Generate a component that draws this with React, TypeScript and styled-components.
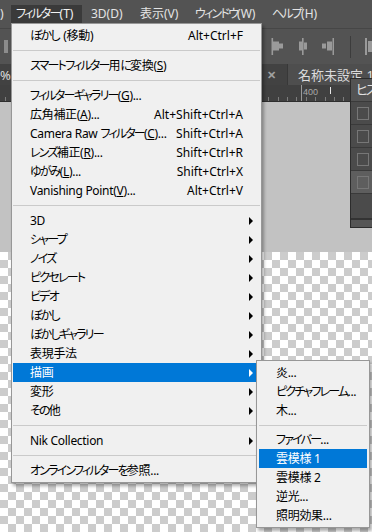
import React from "react";
import styled, { createGlobalStyle, css } from "styled-components";

const GlobalStyle = createGlobalStyle`
  html, body { margin: 0; padding: 0; background: #535353; }
  body { width: 372px; height: 532px; overflow: hidden; }
  #root { width: 372px; height: 532px; }
`;

const UI_FONT = `"Noto Sans", "Noto Sans CJK JP", sans-serif`;

const Screen = styled.div`
  position: relative;
  width: 372px;
  height: 532px;
  overflow: hidden;
  display: flex;
  flex-direction: column;
  font-family: ${UI_FONT};
  font-feature-settings: "palt";
`;

/* kana runs are set tighter, like the proportional kana of the Windows UI font */
const Kana = styled.span<{ $keepGap?: boolean }>`
  letter-spacing: -1.8px;
  margin-right: ${(p) => (p.$keepGap ? "1.8px" : "0")};
`;

const Key = styled.u`
  text-underline-offset: 1px;
`;

/* splits a label into kana / other runs; "&X" marks an underlined access key */
function Txt({ children }: { children: string }) {
  const parts = children.split(/(&.|[\u3041-\u30ff]+)/).filter(Boolean);
  return (
    <>
      {parts.map((p, i) =>
        p[0] === "&" ? (
          <Key key={i}>{p.slice(1)}</Key>
        ) : /[\u3041-\u30ff]/.test(p) ? (
          <Kana key={i} $keepGap={(parts[i + 1] || "").startsWith(" ")}>
            {p}
          </Kana>
        ) : (
          <React.Fragment key={i}>{p}</React.Fragment>
        )
      )}
    </>
  );
}

/* ---------- application chrome ---------- */

const MenuBar = styled.div`
  flex: none;
  height: 29px;
  box-sizing: border-box;
  padding-top: 5px;
  display: flex;
  align-items: flex-start;
  background: #535353;
  border-bottom: 1px solid #464646;
`;

const MenuBarItem = styled.div<{ $w?: number; $active?: boolean; $flush?: boolean }>`
  flex: none;
  width: ${(p) => (p.$w ? `${p.$w}px` : "auto")};
  height: 18px;
  box-sizing: border-box;
  padding: 0 ${(p) => (p.$flush ? "0" : "5px")};
  font-size: 12px;
  line-height: 18px;
  color: #e4e4e4;
  white-space: nowrap;
  overflow: hidden;
  ${(p) =>
    p.$active &&
    css`
      background: #3a3a3a;
      color: #f2f2f2;
    `}
`;

const OptionsBar = styled.div`
  flex: none;
  height: 35px;
  display: flex;
  align-items: center;
  background: #535353;
  padding-left: 4px;
`;

const Grip = styled.div`
  width: 4px;
  height: 13px;
  background: #8c8c8c;
`;

const OptionsIcons = styled.div`
  margin-left: auto;
  display: flex;
  align-items: center;
  gap: 12px;
  height: 100%;
`;

const OptionsDivider = styled.div`
  width: 1px;
  height: 22px;
  background: #3c3c3c;
  margin: 0 2px 0 4px;
`;

const TabRow = styled.div`
  flex: none;
  height: 21px;
  display: flex;
  background: #383838;
`;

const Tab = styled.div<{ $w?: number; $active?: boolean }>`
  flex: ${(p) => (p.$w ? "none" : "1")};
  width: ${(p) => (p.$w ? `${p.$w}px` : "auto")};
  display: flex;
  align-items: center;
  box-sizing: border-box;
  padding: ${(p) => (p.$active ? "0 0 0 10px" : "0 11px 0 0")};
  background: ${(p) => (p.$active ? "#4e4e4e" : "#424242")};
  border-left: ${(p) => (p.$active ? "1px solid #383838" : "none")};
  font-size: 13px;
  color: #dcdcdc;
  white-space: nowrap;
  overflow: hidden;
`;

const TabText = styled.span`
  flex: 1;
  overflow: hidden;
`;

const TabClose = styled.span`
  font-size: 11px;
  color: #a0a0a0;
  font-weight: bold;
`;

const Ruler = styled.div`
  position: relative;
  flex: none;
  height: 16px;
  background-color: #404040;
  background-image: linear-gradient(#9a9a9a, #9a9a9a),
    repeating-linear-gradient(to right, #7c7c7c 0 1px, transparent 1px 9.4px);
  background-size: 1px 16px, 100% 4px;
  background-position: 301px 0, 5px 100%;
  background-repeat: no-repeat, no-repeat;
  border-bottom: 1px solid #2e2e2e;
`;

const RulerLabel = styled.span`
  position: absolute;
  left: 303px;
  top: 2px;
  font-family: "Liberation Sans", sans-serif;
  font-size: 9px;
  color: #a8a8a8;
`;

const RulerMarker = styled.span`
  position: absolute;
  left: 330px;
  top: 2px;
  width: 1px;
  height: 7px;
  background: #e8e8e8;
`;

const Pasteboard = styled.div`
  flex: none;
  height: 150px;
  background: #c2c2c2;
`;

const Transparency = styled.div`
  flex: 1;
  background-color: #ffffff;
  background-image: linear-gradient(45deg, #cccccc 25%, transparent 25%, transparent 75%, #cccccc 75%),
    linear-gradient(45deg, #cccccc 25%, transparent 25%, transparent 75%, #cccccc 75%);
  background-size: 16px 16px;
  background-position: 0 0, 8px 8px;
`;

/* ---------- floating history panel ---------- */

const HistoryPanel = styled.div`
  position: absolute;
  left: 350px;
  top: 78px;
  width: 24px;
  height: 150px;
  display: flex;
  flex-direction: column;
  background: #535353;
  border: 1px solid #2c2c2c;
  border-right: none;
  box-sizing: border-box;
  overflow: hidden;
`;

const PanelTitle = styled.div`
  height: 22px;
  flex: none;
  padding-left: 5px;
  font-size: 13px;
  line-height: 20px;
  color: #e0e0e0;
  white-space: nowrap;
  overflow: hidden;
  border-bottom: 1px solid #3a3a3a;
`;

const PanelRow = styled.div<{ $selected?: boolean }>`
  height: 22px;
  flex: none;
  display: flex;
  align-items: center;
  padding-left: 6px;
  background: ${(p) => (p.$selected ? "#5e5e5e" : "#4b4b4b")};
  border-bottom: 1px solid #3a3a3a;
`;

const PanelCheck = styled.span`
  width: 10px;
  height: 11px;
  border: 1px solid #777777;
`;

const PanelFill = styled.div`
  flex: 1;
  background: #4b4b4b;
  border-bottom: 2px solid #333333;
`;

const PanelFooter = styled.div`
  height: 7px;
  flex: none;
  background: #555555;
`;

/* ---------- popup menus ---------- */

const Popup = styled.div<{ $left: number; $top: number; $width: number }>`
  position: absolute;
  left: ${(p) => p.$left}px;
  top: ${(p) => p.$top}px;
  width: ${(p) => p.$width}px;
  box-sizing: border-box;
  padding: 2px 0;
  background: #f0f0f0;
  border: 1px solid #979797;
  box-shadow: 2px 3px 3px rgba(0, 0, 0, 0.32);
  font-size: 12px;
  color: #000000;
`;

const Row = styled.div<{ $active?: boolean; $inset: number }>`
  height: 19px;
  margin: 0 ${(p) => p.$inset}px;
  display: flex;
  align-items: center;
  padding: 0 7px 0 17px;
  line-height: 19px;
  white-space: nowrap;
  ${(p) =>
    p.$active &&
    css`
      background: #0078d7;
      color: #ffffff;
    `}
`;

const Label = styled.span`
  flex: 1;
  letter-spacing: -0.3px;
`;

const Shortcut = styled.span`
  margin-right: 10px;
`;

const Arrow = styled.span<{ $active?: boolean }>`
  width: 0;
  height: 0;
  border-left: 4px solid ${(p) => (p.$active ? "#ffffff" : "#000000")};
  border-top: 4px solid transparent;
  border-bottom: 4px solid transparent;
`;

const Separator = styled.div<{ $inset: number; $h: number }>`
  height: ${(p) => p.$h}px;
  margin: 0 ${(p) => p.$inset}px;
  display: flex;
  align-items: center;
  &::after {
    content: "";
    flex: 1;
    height: 1px;
    background: #cacaca;
  }
`;

type Item =
  | { sep: true }
  | { label: string; shortcut?: string; sub?: boolean; active?: boolean };

const filterItems: Item[] = [
  { label: "ぼかし (移動)", shortcut: "Alt+Ctrl+F" },
  { sep: true },
  { label: "スマートフィルター用に変換(&S)" },
  { sep: true },
  { label: "フィルターギャラリー(&G)..." },
  { label: "広角補正(&A)...", shortcut: "Alt+Shift+Ctrl+A" },
  { label: "Camera Raw フィルター(&C)...", shortcut: "Shift+Ctrl+A" },
  { label: "レンズ補正(&R)...", shortcut: "Shift+Ctrl+R" },
  { label: "ゆがみ(&L)...", shortcut: "Shift+Ctrl+X" },
  { label: "Vanishing Point(&V)...", shortcut: "Alt+Ctrl+V" },
  { sep: true },
  { label: "3D", sub: true },
  { label: "シャープ", sub: true },
  { label: "ノイズ", sub: true },
  { label: "ピクセレート", sub: true },
  { label: "ビデオ", sub: true },
  { label: "ぼかし", sub: true },
  { label: "ぼかしギャラリー", sub: true },
  { label: "表現手法", sub: true },
  { label: "描画", sub: true, active: true },
  { label: "変形", sub: true },
  { label: "その他", sub: true },
  { sep: true },
  { label: "Nik Collection", sub: true },
  { sep: true },
  { label: "オンラインフィルターを参照..." },
];

const renderItems: Item[] = [
  { label: "炎..." },
  { label: "ピクチャフレーム..." },
  { label: "木..." },
  { sep: true },
  { label: "ファイバー..." },
  { label: "雲模様 1", active: true },
  { label: "雲模様 2" },
  { label: "逆光..." },
  { label: "照明効果..." },
];

function Menu({
  items,
  left,
  top,
  width,
  inset,
  sepH,
}: {
  items: Item[];
  left: number;
  top: number;
  width: number;
  inset: number;
  sepH: number;
}) {
  return (
    <Popup $left={left} $top={top} $width={width}>
      {items.map((it, i) =>
        "sep" in it ? (
          <Separator key={i} $inset={inset} $h={sepH} />
        ) : (
          <Row key={i} $inset={inset} $active={it.active}>
            <Label>
              <Txt>{it.label}</Txt>
            </Label>
            {it.shortcut && <Shortcut>{it.shortcut}</Shortcut>}
            {it.sub && <Arrow $active={it.active} />}
          </Row>
        )
      )}
    </Popup>
  );
}

const AlignIcon = ({ variant }: { variant: "left" | "center" | "right" }) => {
  const lineX = variant === "left" ? 1 : variant === "center" ? 6.5 : 12;
  const bars =
    variant === "left"
      ? [
          [2, 3, 6, 9],
          [8, 5, 4, 5],
        ]
      : variant === "center"
      ? [
          [3, 3, 3, 9],
          [8, 4, 3, 7],
        ]
      : [
          [6, 3, 5, 9],
          [1, 5, 4, 5],
        ];
  return (
    <svg width="13" height="17" viewBox="0 0 13 17">
      <rect x={lineX - 0.5} y="0" width="1.6" height="17" fill="#9a9a9a" />
      {bars.map(([x, y, w, h], i) => (
        <rect key={i} x={x} y={y + 0.5} width={w} height={h} fill="#9a9a9a" />
      ))}
    </svg>
  );
};

const DistIcon = () => (
  <svg width="7" height="17" viewBox="0 0 7 17">
    <rect x="0" y="0" width="2" height="17" fill="#9a9a9a" />
    <rect x="3" y="3" width="4" height="11" fill="#9a9a9a" />
  </svg>
);

export default function App() {
  return (
    <>
      <GlobalStyle />
      <Screen>
        <MenuBar>
          <MenuBarItem $w={11} $flush>
            )
          </MenuBarItem>
          <MenuBarItem $w={71} $active>
            <Txt>フィルター(T)</Txt>
          </MenuBarItem>
          <MenuBarItem $w={49} style={{ marginLeft: 4 }}>
            3D(D)
          </MenuBarItem>
          <MenuBarItem $w={55}>表示(V)</MenuBarItem>
          <MenuBarItem $w={77}>
            <Txt>ウィンドウ(W)</Txt>
          </MenuBarItem>
          <MenuBarItem>
            <Txt>ヘルプ(H)</Txt>
          </MenuBarItem>
        </MenuBar>
        <OptionsBar>
          <Grip />
          <OptionsIcons>
            <AlignIcon variant="left" />
            <AlignIcon variant="center" />
            <AlignIcon variant="right" />
            <OptionsDivider />
            <DistIcon />
          </OptionsIcons>
        </OptionsBar>
        <TabRow>
          <Tab $w={287}>
            <TabText>%</TabText>
            <TabClose>✕</TabClose>
          </Tab>
          <Tab $active>名称未設定 1 @ 66.7% (RGB/8)</Tab>
        </TabRow>
        <Ruler>
          <RulerLabel>400</RulerLabel>
          <RulerMarker />
        </Ruler>
        <Pasteboard />
        <Transparency />

        <HistoryPanel>
          <PanelTitle>
            <Txt>ヒストリー</Txt>
          </PanelTitle>
          <PanelRow>
            <PanelCheck />
          </PanelRow>
          <PanelRow>
            <PanelCheck />
          </PanelRow>
          <PanelRow>
            <PanelCheck />
          </PanelRow>
          <PanelRow $selected>
            <PanelCheck />
          </PanelRow>
          <PanelFill />
          <PanelFooter />
        </HistoryPanel>

        <Menu items={filterItems} left={11} top={23} width={251} inset={1} sepH={11} />
        <Menu items={renderItems} left={256} top={360} width={114} inset={2} sepH={10} />
      </Screen>
    </>
  );
}
